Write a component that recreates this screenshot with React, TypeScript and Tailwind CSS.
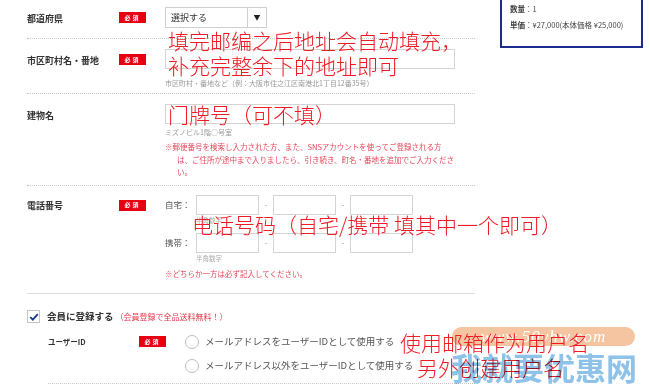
import React from "react";

/* ------------------------------- helpers ------------------------------- */

const jp = { fontFamily: '"Noto Sans CJK JP", "Noto Sans", sans-serif' };
const sc = { fontFamily: '"Noto Sans CJK SC", "Noto Sans", sans-serif' };

const Badge = () => (
  <div className="flex h-[11px] w-[27px] items-center justify-center bg-[#e60012] text-[6px] font-bold leading-none tracking-[2px] text-white">
    必須
  </div>
);

const Input = ({ w }: { w: string }) => (
  <div className={`h-[20px] border border-[#d4d4d4] bg-white ${w}`} />
);

const Label = ({ children }: { children: React.ReactNode }) => (
  <div className="flex h-[21px] w-[92px] items-center pt-[2px] text-[9px] font-bold text-[#333]">
    {children}
  </div>
);

const BadgeCol = () => (
  <div className="flex h-[21px] w-[46px] items-center">
    <Badge />
  </div>
);

const PhoneLine = ({ label }: { label: string }) => (
  <div className="flex h-[20px] items-center">
    <span className="w-[31px] text-[8.5px] text-[#555]">{label}</span>
    <Input w="w-[63px]" />
    <span className="w-[14px] text-center text-[7px] text-[#888]">-</span>
    <Input w="w-[63px]" />
    <span className="w-[14px] text-center text-[7px] text-[#888]">-</span>
    <Input w="w-[63px]" />
  </div>
);

const Radio = ({ text }: { text: string }) => (
  <div className="flex h-[18px] items-center">
    <span className="h-[14px] w-[14px] rounded-full border-[1.5px] border-[#bdbdbd] bg-white" />
    <span className="ml-[6px] text-[9.5px] text-[#555]">{text}</span>
  </div>
);

/* --------------------------------- app --------------------------------- */

export default function App() {
  return (
    <div className="relative h-[390px] w-[650px] overflow-hidden bg-white" style={jp}>
      <div className="flex">
        {/* FORM */}
        <div className="w-[475px] pl-[27px]">
          {/* 都道府県 */}
          <div className="flex border-b border-dotted border-[#c8c8c8] pb-[10px] pt-[7px]">
            <Label>都道府県</Label>
            <BadgeCol />
            <div className="flex h-[21px] w-[102px] border border-[#cfcfcf]">
              <div className="flex flex-1 items-center pl-[5px] text-[9px] text-[#333]">選択する</div>
              <div className="flex w-[19px] items-center justify-center border-l border-[#cfcfcf] text-[7px] text-[#222]">
                ▼
              </div>
            </div>
          </div>

          {/* 市区町村名・番地 */}
          <div className="flex border-b border-dotted border-[#c8c8c8] pb-[5px] pt-[10px]">
            <Label>市区町村名・番地</Label>
            <BadgeCol />
            <div className="flex-1 pr-[20px]">
              <Input w="w-full" />
              <div className="mt-[9px] whitespace-nowrap text-[7px] leading-[10px] text-[#999]">
                市区町村・番地など（例：大阪市住之江区南港北1丁目12番35号）
              </div>
            </div>
          </div>

          {/* 建物名 */}
          <div className="flex border-b border-dotted border-[#c8c8c8] pb-[6px] pt-[10px]">
            <Label>建物名</Label>
            <div className="w-[46px]" />
            <div className="flex-1 pr-[20px]">
              <Input w="w-full" />
              <div className="mt-[3px] text-[7px] leading-[10px] text-[#999]">ミズノビル1階○号室</div>
              <div className="mt-[4px] whitespace-nowrap text-[7.5px] leading-[12.5px] text-[#e8475a]">
                <div>※郵便番号を検索し入力された方、また、SNSアカウントを使ってご登録される方</div>
                <div className="pl-[12px]">は、ご住所が途中まで入りましたら、引き続き、町名・番地を追加でご入力くださ</div>
                <div className="pl-[12px]">い。</div>
              </div>
            </div>
          </div>

          {/* 電話番号 */}
          <div className="flex border-b border-[#dcdcdc] pb-[13px] pt-[9px]">
            <Label>電話番号</Label>
            <BadgeCol />
            <div className="flex-1">
              <PhoneLine label="自宅：" />
              <div className="pl-[31px] text-[6.5px] leading-[10px] text-[#aaa]">半角数字</div>
              <div className="mt-[8px]">
                <PhoneLine label="携帯：" />
              </div>
              <div className="pl-[31px] text-[6.5px] leading-[10px] text-[#aaa]">半角数字</div>
              <div className="mt-[5px] text-[7.5px] leading-[12px] text-[#e8475a]">
                ※どちらか一方は必ず記入してください。
              </div>
            </div>
          </div>

          {/* 会員登録 */}
          <div className="pt-[16px]">
            <div className="flex h-[14px] items-center">
              <span className="flex h-[13px] w-[13px] items-center justify-center border border-[#c4c4c4] bg-white">
                <svg viewBox="0 0 12 12" className="h-[10px] w-[10px]">
                  <path d="M1.5 6.2 L4.6 9.2 L10.6 2.6" fill="none" stroke="#1b3a8e" strokeWidth="2.2" />
                </svg>
              </span>
              <span className="ml-[7px] text-[9.5px] font-bold text-[#333]">会員に登録する</span>
              <span className="ml-[2px] text-[8px] text-[#e8364a]">（会員登録で全品送料無料！）</span>
            </div>
            <div className="ml-[21px] mt-[9px] flex border-b border-dotted border-[#c8c8c8] pb-[8px]">
              <div className="flex h-[18px] w-[91px] items-center text-[7.5px] font-bold text-[#333]">ユーザーID</div>
              <div className="flex h-[18px] w-[46px] items-center">
                <Badge />
              </div>
              <div className="flex flex-col gap-[6px]">
                <Radio text="メールアドレスをユーザーIDとして使用する" />
                <Radio text="メールアドレス以外をユーザーIDとして使用する" />
              </div>
            </div>
          </div>
        </div>

        {/* SIDE SUMMARY */}
        <div className="ml-[25px] h-[48px] w-[143px] border-2 border-t-0 border-[#1c2b8c] pl-[8px] pt-[3px] text-[7.5px] leading-[12px] text-[#444]">
          <div>
            <span className="font-bold">数量</span>：1
          </div>
          <div className="mt-[4px] whitespace-nowrap">
            <span className="font-bold">単価</span>：¥27,000(本体価格 ¥25,000)
          </div>
        </div>
      </div>

      {/* WATERMARK PILL (under the notes) */}
      <div className="pointer-events-none absolute left-[452px] top-[327px] flex h-[19px] w-[183px] items-center justify-center rounded-full bg-[#f3b58a]/80">
        <span className="text-[17px] italic tracking-[1px] text-white" style={{ fontFamily: '"Liberation Serif", serif' }}>
          www.50yhw.com
        </span>
      </div>

      {/* ANNOTATIONS */}
      <div className="pointer-events-none absolute left-[168px] top-[28px] whitespace-nowrap text-[21px] font-light leading-[25px] text-[#ee1c25]" style={sc}>
        <div>填完邮编之后地址会自动填充，</div>
        <div>补充完整余下的地址即可</div>
      </div>
      <div className="pointer-events-none absolute left-[168px] top-[102px] whitespace-nowrap text-[21px] font-light leading-[25px] text-[#ee1c25]" style={sc}>
        门牌号（可不填）
      </div>
      <div className="pointer-events-none absolute left-[192px] top-[212px] whitespace-nowrap text-[21px] font-light leading-[25px] text-[#ee1c25]" style={sc}>
        电话号码（自宅/携带 填其中一个即可）
      </div>
      <div className="pointer-events-none absolute left-[400px] top-[330px] whitespace-nowrap text-[21px] font-light leading-[25px] text-[#ee1c25]" style={sc}>
        使用邮箱作为用户名
      </div>
      <div className="pointer-events-none absolute left-[417px] top-[355px] whitespace-nowrap text-[21px] font-light leading-[25px] text-[#ee1c25]" style={sc}>
        另外创建用户名
      </div>

      {/* WATERMARK TEXT */}
      <div
        className="pointer-events-none absolute left-[451px] top-[347px] whitespace-nowrap text-[31px] font-bold leading-[40px] text-[#8fc2e8] mix-blend-multiply"
        style={sc}
      >
        我就要优惠网
      </div>
    </div>
  );
}
